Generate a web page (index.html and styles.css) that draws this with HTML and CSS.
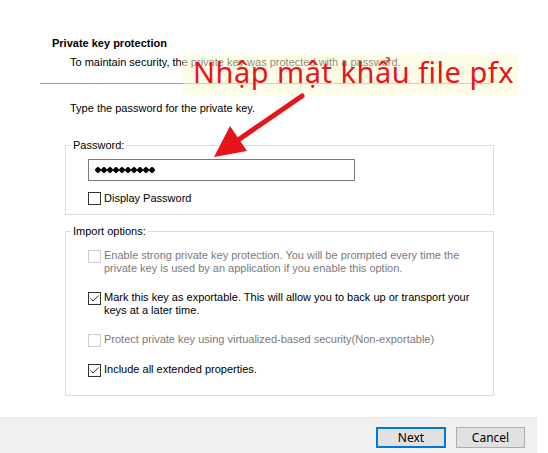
FILE: index.html
```html
<!DOCTYPE html>
<html>
<head>
<meta charset="utf-8">
<link rel="stylesheet" href="styles.css">
</head>
<body>
<div class="page">
  <div class="header">
    <div class="title">Private key protection</div>
    <div class="subtitle">To maintain security, the private key was protected with a password.</div>
  </div>
  <div class="sep"></div>
  <div class="content">
    <p class="intro">Type the password for the private key.</p>
    <fieldset class="group pw">
      <legend>Password:</legend>
      <div class="group-body">
        <div class="input"><span class="dots"></span></div>
        <label class="row display">
          <svg class="cb" viewBox="0 0 13 13"><rect x="0.5" y="0.5" width="12" height="12" fill="#fff" stroke="#333"/></svg>
          <span>Display Password</span>
        </label>
      </div>
    </fieldset>
    <fieldset class="group opts">
      <legend>Import options:</legend>
      <div class="group-body options">
        <label class="row disabled">
          <svg class="cb" viewBox="0 0 13 13"><rect x="0.5" y="0.5" width="12" height="12" fill="#fff" stroke="#cccccc"/></svg>
          <span>Enable strong private key protection. You will be prompted every time the<br>private key is used by an application if you enable this option.</span>
        </label>
        <label class="row">
          <svg class="cb" viewBox="0 0 13 13"><rect x="0.5" y="0.5" width="12" height="12" fill="#fff" stroke="#333"/><path d="M2.5 6.5 L5 9 L10.5 3.5" stroke="#333" fill="none"/></svg>
          <span>Mark this key as exportable. This will allow you to back up or transport your<br>keys at a later time.</span>
        </label>
        <label class="row disabled">
          <svg class="cb" viewBox="0 0 13 13"><rect x="0.5" y="0.5" width="12" height="12" fill="#fff" stroke="#cccccc"/></svg>
          <span>Protect private key using virtualized-based security(Non-exportable)</span>
        </label>
        <label class="row">
          <svg class="cb" viewBox="0 0 13 13"><rect x="0.5" y="0.5" width="12" height="12" fill="#fff" stroke="#333"/><path d="M2.5 6.5 L5 9 L10.5 3.5" stroke="#333" fill="none"/></svg>
          <span>Include all extended properties.</span>
        </label>
      </div>
    </fieldset>
  </div>
  <div class="footer">
    <button class="btn primary">Next</button>
    <button class="btn">Cancel</button>
  </div>
  <div class="note">Nhập mật khẩu file pfx</div>
  <svg class="arrow" width="110" height="80" viewBox="0 0 110 80">
    <line x1="97" y1="6" x2="33" y2="50" stroke="#e8141c" stroke-width="5" stroke-linecap="round"/>
    <polygon points="9,67 25,36 42,61" fill="#e8141c"/>
  </svg>
</div>
</body>
</html>
```
FILE: styles.css
```css
* { box-sizing: border-box; }
html, body { margin: 0; padding: 0; background: #fff; }
body {
  font-family: "Liberation Sans", Arial, sans-serif;
  font-size: 11px;
  line-height: 13px;
  color: #000;
}
.page {
  position: relative;
  width: 548px;
  height: 453px;
  overflow: hidden;
}
.header { padding-top: 37px; }
.title { font-weight: bold; margin-left: 52px; }
.subtitle { margin-top: 6px; margin-left: 70px; }
.sep {
  margin: 14px 0 0 40px;
  width: 451px;
  height: 1px;
  background: #a0a0a0;
}
.content { padding-left: 65px; }
.intro { margin: 18px 0 0 5px; }
.group {
  width: 429px;
  margin: 0;
  padding: 7px 0 9px 0;
  border: 1px solid #dcdcdc;
  min-width: 0;
}
.group legend {
  padding: 0 2px;
  margin-left: 5px;
  line-height: 13px;
}
.pw { margin-top: 24px; }
.opts { margin-top: 10px; padding: 11px 0 18px 0; }
.group-body { padding-left: 22px; }
.input {
  width: 267px;
  height: 22px;
  border: 1px solid #7a7a7a;
  background: #fff;
  display: flex;
  align-items: center;
  padding-left: 6px;
}
.dots {
  display: block;
  width: 60px;
  height: 6px;
  background: radial-gradient(circle at 3px 3px, #000 2.5px, transparent 3px) 0 0 / 6px 6px repeat-x;
}
.row {
  display: flex;
  align-items: flex-start;
  gap: 3px;
}
.row .cb {
  flex: none;
  width: 13px;
  height: 13px;
  display: block;
}
.display { margin-top: 11px; }
.options { display: flex; flex-direction: column; gap: 16px; }
.options .cb { margin-top: 1px; }
.disabled { color: #7a7a7a; }
.footer {
  margin-top: 21px;
  width: 537px;
  height: 38px;
  background: #f0f0f0;
  border-top: 1px solid #e6e6e6;
  display: flex;
  justify-content: flex-end;
  align-items: flex-start;
  gap: 10px;
  padding: 9px 12px 0 0;
}
.btn {
  width: 69px;
  height: 21px;
  font-family: "Noto Sans", "Liberation Sans", sans-serif;
  font-size: 12px;
  line-height: 16px;
  color: #000;
  background: #e1e1e1;
  border: 1px solid #adadad;
  padding: 0;
  margin: 0;
}
.btn.primary {
  width: 70px;
  border: 2px solid #0078d7;
}
.note {
  position: absolute;
  left: 183px;
  top: 53px;
  width: 335px;
  height: 42px;
  background: rgba(252, 249, 212, 0.55);
  color: #e8141c;
  font-family: "Noto Sans", sans-serif;
  font-size: 29px;
  letter-spacing: 0.5px;
  line-height: 38px;
  padding-left: 10px;
  white-space: nowrap;
}
.arrow {
  position: absolute;
  left: 205px;
  top: 90px;
}
```
